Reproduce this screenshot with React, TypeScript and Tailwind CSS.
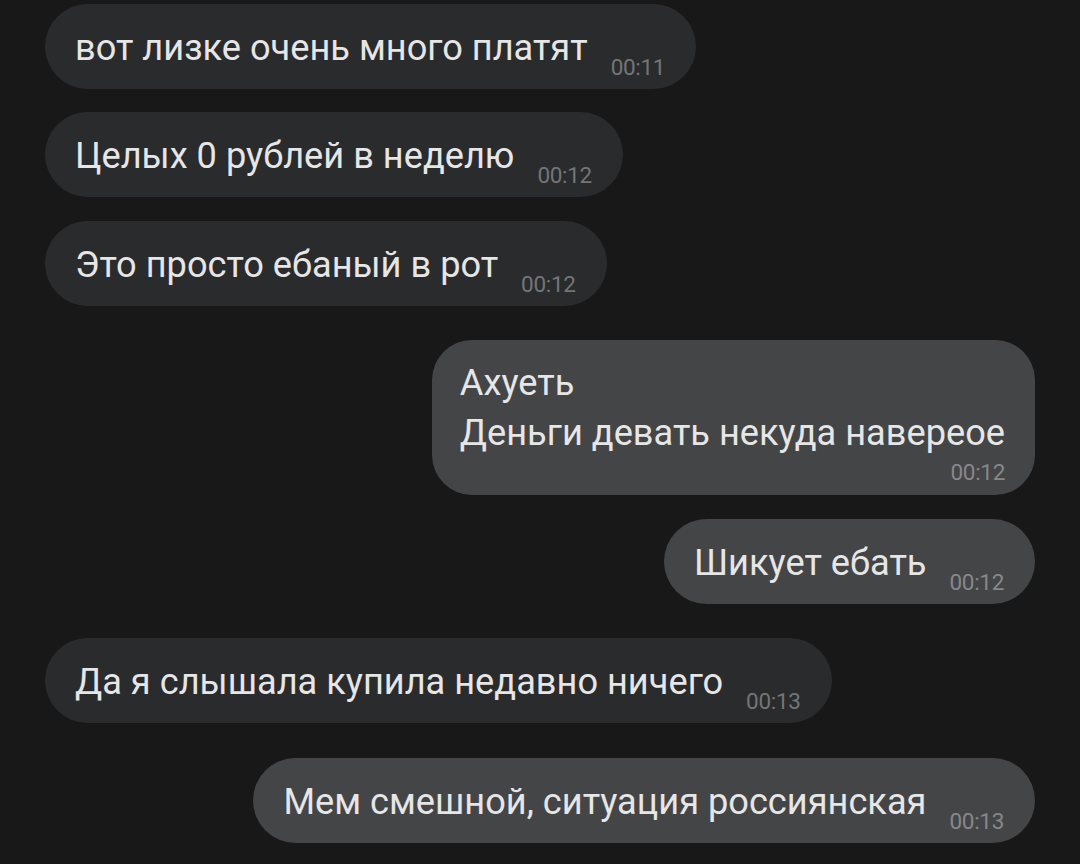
import React from "react";

type Msg = { side: "in" | "out"; lines: string[]; time: string; gapTop: number };

const msgs: Msg[] = [
  { side: "in", lines: ["вот лизке очень много платят"], time: "00:11", gapTop: 0 },
  { side: "in", lines: ["Целых 0 рублей в неделю"], time: "00:12", gapTop: 23 },
  { side: "in", lines: ["Это просто ебаный в рот"], time: "00:12", gapTop: 24 },
  { side: "out", lines: ["Ахуеть", "Деньги девать некуда навереое"], time: "00:12", gapTop: 34 },
  { side: "out", lines: ["Шикует ебать"], time: "00:12", gapTop: 24 },
  { side: "in", lines: ["Да я слышала купила недавно ничего"], time: "00:13", gapTop: 34 },
  { side: "out", lines: ["Мем смешной, ситуация россиянская"], time: "00:13", gapTop: 35 },
];

function Bubble({ m }: { m: Msg }) {
  const isIn = m.side === "in";
  const bg = isIn ? "bg-[#2a2b2d]" : "bg-[#444547]";
  const tc = isIn ? "text-[#747577]" : "text-[#87888a]";
  const align = isIn ? "self-start" : "self-end";
  if (m.lines.length > 1) {
    return (
      <div
        className={`${bg} ${align} rounded-[40px] pl-[28px] pr-[30px] pt-[18px] pb-[12px] flex flex-col`}
        style={{ marginTop: m.gapTop }}
      >
        {m.lines.map((l, i) => (
          <div key={i} className="text-[36.2px] leading-[50px] text-[#e6e6e6] whitespace-nowrap">
            {l}
          </div>
        ))}
        <div className={`self-end mt-[3px] text-[22.5px] leading-[22px] ${tc} tracking-[-0.3px]`}>
          {m.time}
        </div>
      </div>
    );
  }
  return (
    <div
      className={`${bg} ${align} h-[85px] rounded-full pl-[30px] pr-[31px] pt-[19px] flex items-start`}
      style={{ marginTop: m.gapTop }}
    >
      <span className="text-[36.2px] leading-[50px] text-[#e6e6e6] whitespace-nowrap">
        {m.lines[0]}
      </span>
      <span className={`ml-[23px] mt-[33px] text-[22.5px] leading-[22px] ${tc} tracking-[-0.3px]`}>
        {m.time}
      </span>
    </div>
  );
}

export default function App() {
  return (
    <div
      className="w-[1080px] h-[864px] bg-[#181818] overflow-hidden flex flex-col px-[45px] pt-[4px]"
      style={{ fontFamily: "Roboto, 'Noto Sans', sans-serif" }}
    >
      {msgs.map((m, i) => (
        <Bubble key={i} m={m} />
      ))}
    </div>
  );
}
